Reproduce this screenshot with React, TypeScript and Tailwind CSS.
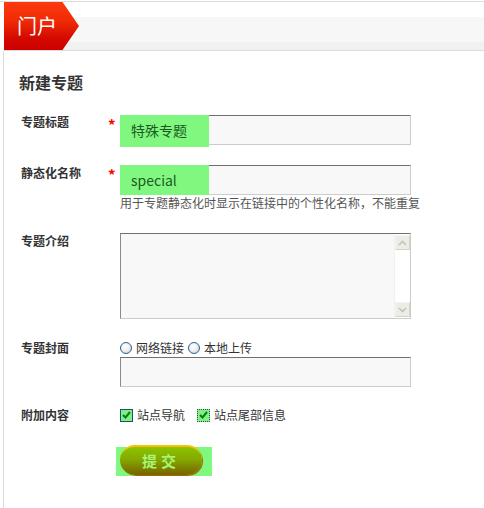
import React from "react";

const cjk = "font-['Noto_Sans_CJK_SC','Noto_Sans',sans-serif]";

function Label({ text }: { text: string }) {
  return (
    <div className="w-[87px] shrink-0 text-[12px] font-bold leading-[14px] text-[#333]">
      {text}
    </div>
  );
}

function Star({ show }: { show?: boolean }) {
  return (
    <div className="w-[12px] shrink-0 pt-[3px] text-[15px] font-bold leading-[14px] text-[#ff0000]">
      {show ? "*" : ""}
    </div>
  );
}

function TextBox({ value, tall }: { value?: string; tall?: boolean }) {
  return (
    <div className="relative h-[30px] w-[291px] border border-t-[#6f6f6f] border-l-[#8a8a8a] border-r-[#cccccc] border-b-[#cccccc] bg-[#f8f8f8]">
      {value && (
        <>
          <span
            className={`absolute left-[-1px] top-[-1px] w-[89px] bg-[#80f880] ${tall ? "h-[32px]" : "h-[30px]"}`}
          />
          <span className="relative block pl-[10px] text-[14px] leading-[28px] text-[#1d5a23]">
            {value}
          </span>
        </>
      )}
    </div>
  );
}

function Radio() {
  return (
    <span className="inline-block h-[12px] w-[12px] shrink-0 rounded-full border border-[#2f5f8c] bg-[radial-gradient(circle_at_40%_35%,#ffffff_0,#f0f0f0_45%,#c9c9c9_100%)]" />
  );
}

function Check({ dotted }: { dotted?: boolean }) {
  return (
    <span
      className={`flex h-[13px] w-[13px] shrink-0 items-center justify-center bg-[#80f080] ${
        dotted ? "border border-dotted border-[#3a4a6a]" : "border border-[#1c4f7a]"
      }`}
    >
      <svg width="9" height="8" viewBox="0 0 9 8">
        <path d="M1 4 L3.5 6.5 L8 1" fill="none" stroke="#0a7a1a" strokeWidth="2" />
      </svg>
    </span>
  );
}

export default function App() {
  return (
    <div className={`h-[508px] w-[484px] overflow-hidden bg-white pt-px ${cjk}`}>
      {/* Header */}
      <div className="border-t border-[#dcdcdc]">
        <div className="ml-[4px] flex h-[49px] border-b border-[#dcdcdc] bg-[linear-gradient(to_bottom,#ffffff_0,#ffffff_15px,#f7f7f7_15px,#f7f7f7_40px,#f1f1f1_40px)]">
          <div className="flex h-full w-[75px] items-center bg-[linear-gradient(to_bottom,#fb3a0e_0,#f02a06_40%,#d40a00_75%,#cc0000_100%)] pl-[13px] [clip-path:polygon(0_0,78%_0,100%_50%,78%_100%,0_100%)]">
            <span className="text-[20px] leading-none text-white">门户</span>
          </div>
        </div>
      </div>

      {/* Body */}
      <div className="ml-[3px] h-full border-l border-[#dcdcdc] pl-[17px]">
        <h2 className="-ml-[2px] pt-[21px] text-[16px] font-bold leading-[20px] text-[#333]">
          新建专题
        </h2>

        {/* 专题标题 */}
        <div className="mt-[23px] flex items-start">
          <Label text="专题标题" />
          <Star show />
          <TextBox value="特殊专题" tall />
        </div>

        {/* 静态化名称 */}
        <div className="mt-[20px] flex items-start">
          <div className="pt-[1px]">
            <Label text="静态化名称" />
          </div>
          <Star show />
          <div>
            <TextBox value="special" />
            <p className="whitespace-nowrap text-[12px] leading-[16px] text-[#555]">
              用于专题静态化时显示在链接中的个性化名称，不能重复
            </p>
          </div>
        </div>

        {/* 专题介绍 */}
        <div className="mt-[22px] flex items-start">
          <div className="pt-[1px]">
            <Label text="专题介绍" />
          </div>
          <Star />
          <div className="flex h-[86px] w-[291px] border border-t-[#6f6f6f] border-l-[#8a8a8a] border-r-[#cccccc] border-b-[#cccccc] bg-[#f8f8f8]">
            <div className="flex-1" />
            <div className="flex w-[16px] flex-col justify-between border-l border-[#f0f0f0] bg-white py-px">
              <span className="flex h-[15px] w-[15px] items-center justify-center border border-[#f4f4ee] border-b-[#d4d4c8] border-r-[#d4d4c8] bg-[#ededE6]">
                <svg width="9" height="6" viewBox="0 0 9 6">
                  <path d="M1 5 L4.5 1.5 L8 5" fill="none" stroke="#c3c3bb" strokeWidth="1.6" />
                </svg>
              </span>
              <span className="flex h-[15px] w-[15px] items-center justify-center border border-[#f4f4ee] border-b-[#d4d4c8] border-r-[#d4d4c8] bg-[#ededE6]">
                <svg width="9" height="6" viewBox="0 0 9 6">
                  <path d="M1 1 L4.5 4.5 L8 1" fill="none" stroke="#c3c3bb" strokeWidth="1.6" />
                </svg>
              </span>
            </div>
          </div>
        </div>

        {/* 专题封面 */}
        <div className="mt-[22px] flex items-start">
          <Label text="专题封面" />
          <Star />
          <div>
            <div className="flex h-[14px] items-center text-[12px] leading-[14px] text-[#333]">
              <Radio />
              <span className="ml-[4px] mr-[4px]">网络链接</span>
              <Radio />
              <span className="ml-[4px]">本地上传</span>
            </div>
            <div className="mt-[2px]">
              <TextBox />
            </div>
          </div>
        </div>

        {/* 附加内容 */}
        <div className="mt-[21px] flex items-start">
          <Label text="附加内容" />
          <Star />
          <div className="flex h-[14px] items-center text-[12px] leading-[14px] text-[#333]">
            <Check />
            <span className="ml-[4px] mr-[12px]">站点导航</span>
            <Check dotted />
            <span className="ml-[4px]">站点尾部信息</span>
          </div>
        </div>

        {/* Submit */}
        <div className="mt-[23px] flex">
          <div className="w-[99px] shrink-0" />
          <div className="relative h-[31px] w-[96px]">
            <span className="absolute left-[-4px] top-[2px] h-[29px] w-[96px] bg-[#80f880]" />
            <button className="relative flex h-[30px] w-[82px] items-center justify-center rounded-full border-t-2 border-[#f6c400] bg-[linear-gradient(to_bottom,#8cc400_0,#84a800_45%,#7c7a00_80%,#7a6400_100%)] shadow-[1px_1px_0_#a06a00] text-[15px] font-bold tracking-[4px] text-[#a8f474]">
              提交
            </button>
          </div>
        </div>
      </div>
    </div>
  );
}
